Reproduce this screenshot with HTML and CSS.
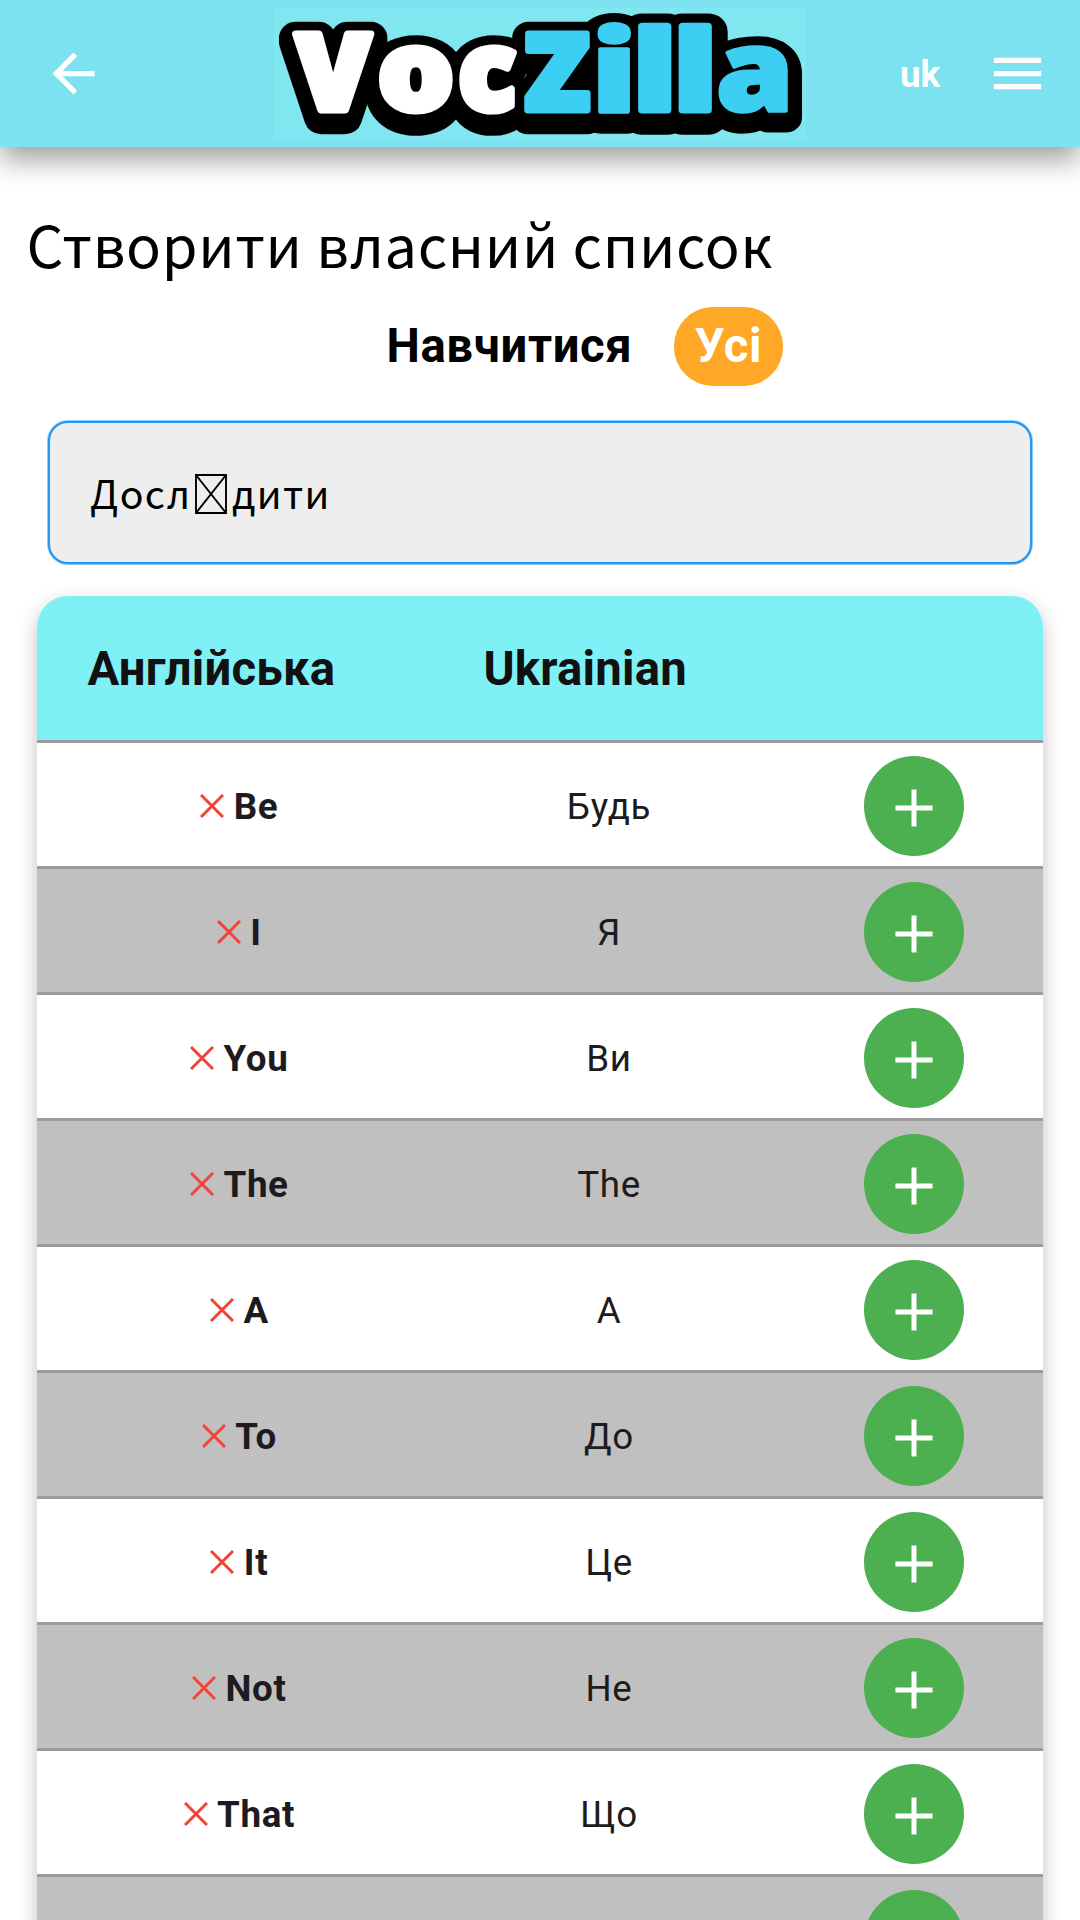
FILE: index.html
```
<!DOCTYPE html>
<html lang="uk">
<head>
<meta charset="utf-8">
<title>VocZilla</title>
<link rel="stylesheet" href="styles.css">
</head>
<body>
<svg class="sprite" aria-hidden="true">
  <symbol id="cross" viewBox="0 0 24 24"><path d="M1 1 23 23M23 1 1 23"/></symbol>
  <symbol id="plus" viewBox="0 0 38 38"><path d="M0.4 19H37.6M19 0.4V37.6"/></symbol>
</svg>
<div class="app">
  <header class="bar">
    <svg class="icon back" viewBox="0 0 24 24"><path d="M20 11H7.83l5.59-5.59L12 4l-8 8 8 8 1.41-1.41L7.83 13H20v-2z"/></svg>
    <svg class="logo" viewBox="274 8 532 131" role="img" aria-label="VocZilla">
      <defs>
        <g id="voc">
          <text transform="translate(295.5 110) scale(1.086 1.063)">V</text>
          <text transform="translate(377.7 110.4) scale(1.196 1.105)">o</text>
          <text transform="translate(458.2 110.4) scale(1.073 1.105)">c</text>
        </g>
        <g id="zil">
          <text transform="translate(524.4 110) scale(1.07 1.063)">Z</text>
          <text transform="translate(633.7 110) scale(1.3 1.099)">l</text>
          <text transform="translate(674.2 110) scale(1.3 1.099)">l</text>
        </g>
        <g id="ia">
          <text transform="translate(591.1 111.9) scale(1.42 1.134)">i</text>
          <text transform="translate(716 110.5) scale(1.247 1.131)">a</text>
        </g>
        <g id="word"><use href="#voc"/><use href="#zil"/></g>
      </defs>
      <use class="outline" href="#word" y="4"/>
      <use class="outline" href="#word" y="7.5"/>
      <use class="outline slim" href="#ia" y="4"/>
      <use class="outline slim" href="#ia" y="7.5"/>
      <use class="outline core" href="#word" y="5"/>
      <use class="outline core" href="#ia" y="5"/>
      <use class="voc" href="#voc"/>
      <use class="zilla" href="#zil"/>
      <use class="zilla thin" href="#ia"/>
    </svg>
    <span class="lang">uk</span>
    <svg class="icon menu" viewBox="0 0 24 24"><path d="M3 18h18v-2H3v2zm0-5h18v-2H3v2zm0-7v2h18V6H3z"/></svg>
  </header>

  <h1 class="title">Створити власний список</h1>

  <nav class="tabs">
    <span class="tab">Навчитися</span>
    <span class="tab active">Усі</span>
  </nav>

  <div class="search">
    <span>Досл</span><svg class="tofu" viewBox="0 0 32 40"><path d="M1 1H31V39H1ZM1 1 31 39M31 1 1 39"/></svg><span>дити</span>
  </div>

  <section class="table">
    <div class="head"><span class="h-en">Англійська</span><span>Ukrainian</span></div>
    <div class="row"><span class="en"><svg class="x"><use href="#cross"/></svg>Be</span><span class="tr">Будь</span><span class="add"><svg><use href="#plus"/></svg></span></div>
    <div class="row"><span class="en"><svg class="x"><use href="#cross"/></svg>I</span><span class="tr">Я</span><span class="add"><svg><use href="#plus"/></svg></span></div>
    <div class="row"><span class="en"><svg class="x"><use href="#cross"/></svg>You</span><span class="tr">Ви</span><span class="add"><svg><use href="#plus"/></svg></span></div>
    <div class="row"><span class="en"><svg class="x"><use href="#cross"/></svg>The</span><span class="tr">The</span><span class="add"><svg><use href="#plus"/></svg></span></div>
    <div class="row"><span class="en"><svg class="x"><use href="#cross"/></svg>A</span><span class="tr">А</span><span class="add"><svg><use href="#plus"/></svg></span></div>
    <div class="row"><span class="en"><svg class="x"><use href="#cross"/></svg>To</span><span class="tr">До</span><span class="add"><svg><use href="#plus"/></svg></span></div>
    <div class="row"><span class="en"><svg class="x"><use href="#cross"/></svg>It</span><span class="tr">Це</span><span class="add"><svg><use href="#plus"/></svg></span></div>
    <div class="row"><span class="en"><svg class="x"><use href="#cross"/></svg>Not</span><span class="tr">Не</span><span class="add"><svg><use href="#plus"/></svg></span></div>
    <div class="row"><span class="en"><svg class="x"><use href="#cross"/></svg>That</span><span class="tr">Що</span><span class="add"><svg><use href="#plus"/></svg></span></div>
    <div class="row"><span class="en"></span><span class="tr"></span><span class="add"></span></div>
  </section>
</div>
</body>
</html>
```
FILE: styles.css
```
* { box-sizing: border-box; }

body {
  margin: 0;
  background: #fff;
  font-family: Roboto, sans-serif;
  color: #1d1b20;
}

.sprite { display: none; }

.app {
  height: 1920px;
  overflow: hidden;
}

.bar {
  display: flex;
  align-items: center;
  height: 147px;
  padding: 0 31.5px 0 42px;
  background: #7de2f0;
  box-shadow: 0 13px 26px rgba(0, 0, 0, .37);
}

.icon {
  width: 63px;
  height: 63px;
  flex: none;
  fill: #fff;
}

.logo {
  width: 532px;
  height: 131px;
  margin-left: 169px;
  flex: none;
  background: #80e7f1;
  overflow: visible;
}

.logo text {
  font-family: "Open Sans", sans-serif;
  font-size: 100px;
  font-weight: 800;
}

.outline {
  fill: #000;
  stroke: #000;
  stroke-width: 30.5px;
  stroke-linejoin: round;
}

.slim { stroke-width: 26px; }
.core { stroke-width: 14px; }

.voc, .zilla {
  stroke-width: 6.4px;
  stroke-linejoin: round;
}

.voc { fill: #fff; stroke: #fff; }
.zilla { fill: #3dcff3; stroke: #3dcff3; }
.thin { stroke-width: 3.2px; }

.lang {
  margin: 1px 0 0 94px;
  font-size: 36.75px;
  font-weight: 700;
  color: #fff;
}

.menu { margin-left: auto; }

.title {
  margin: 53px 0 0 26.6px;
  height: 86px;
  line-height: 86px;
  font-family: "Noto Sans CJK JP", sans-serif;
  font-size: 57.75px;
  font-weight: 400;
  letter-spacing: .65px;
  white-space: nowrap;
  color: #000;
}

.tabs {
  display: flex;
  align-items: center;
  margin: 21px 0 0 386.4px;
  height: 79px;
  font-size: 47.25px;
  font-weight: 700;
  letter-spacing: .65px;
  line-height: 79px;
  color: #000;
}

.tab { height: 79px; }

.active {
  margin-left: 41.4px;
  padding: 0 21px;
  width: 109.5px;
  border-radius: 39px;
  background: #ffa726;
  color: #fff;
}

.search {
  display: flex;
  align-items: center;
  margin: 35px 48px 0;
  height: 142.5px;
  padding: 0 40px 1px;
  border: 2px solid #2196f3;
  border-radius: 20px;
  background: #eee;
  box-shadow: 0 0 0 1px rgba(33, 150, 243, .5);
  font-family: "Noto Sans CJK JP", sans-serif;
  font-size: 39.375px;
  letter-spacing: 1.31px;
  color: #000;
}

.tofu {
  width: 32px;
  height: 40px;
  margin: 4px 5.3px 0 3.4px;
  fill: none;
  stroke: #000;
  stroke-width: 1.9px;
}

.table {
  margin: 32.5px 37px 0;
  border-radius: 31px 31px 0 0;
  background: #fff;
  box-shadow: 0 8px 20px rgba(0, 0, 0, .25);
}

.head {
  display: flex;
  align-items: center;
  height: 144px;
  padding: 2px 0 0 50.5px;
  border-radius: 31px 31px 0 0;
  background: #80f0f7;
  font-size: 47.25px;
  font-weight: 700;
  letter-spacing: .22px;
  color: #111;
}

.h-en { width: 396px; }

.row {
  display: grid;
  grid-template-columns: 404.6px 334.8px 274.6px;
  align-items: center;
  height: 126px;
  padding-top: 3px;
  border-top: 3px solid #9c9c9c;
  font-size: 36.75px;
  letter-spacing: .65px;
}

.row:nth-child(odd) { background: #c0c0c0; }

.en {
  display: flex;
  justify-content: center;
  align-items: center;
  font-weight: 700;
}

.x {
  width: 24px;
  height: 24px;
  margin-right: 9.5px;
  fill: none;
  stroke: #f44336;
  stroke-width: 3px;
}

.tr { text-align: center; }

.add {
  display: flex;
  justify-content: center;
  align-items: center;
  justify-self: center;
  width: 100px;
  height: 100px;
  padding-top: 4px;
  border-radius: 50%;
  background: #4caf50;
}

.add svg {
  width: 38px;
  height: 38px;
  fill: none;
  stroke: #fff;
  stroke-width: 5px;
}
```
